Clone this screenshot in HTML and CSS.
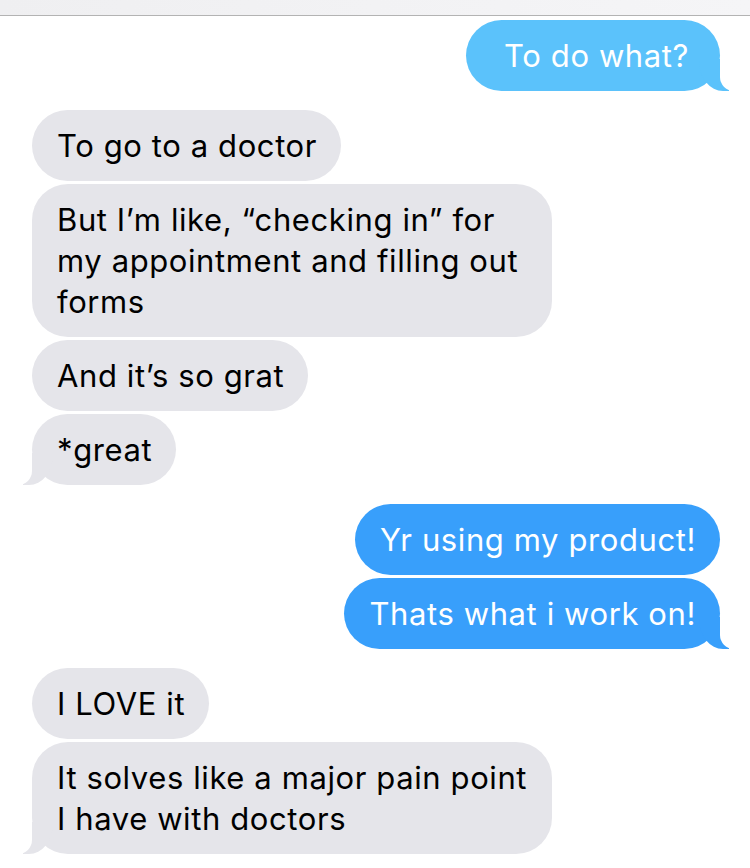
FILE: index.html
```html
<!DOCTYPE html>
<html lang="en">
<head>
    <meta charset="UTF-8">
    <meta name="viewport" content="width=device-width, initial-scale=1.0">
    <title>Messages</title>
    <link rel="stylesheet" href="styles.css">
</head>
<body>
    <div class="topbar"></div>

    <div class="thread">
        <div class="group sent">
            <p class="bubble light tail first">To do what?</p>
        </div>

        <div class="group received">
            <p class="bubble">To go to a doctor</p>
            <p class="bubble">But I’m like, “checking in” for my appointment and filling out forms</p>
            <p class="bubble">And it’s so grat</p>
            <p class="bubble tail">*great</p>
        </div>

        <div class="group sent">
            <p class="bubble">Yr using my product!</p>
            <p class="bubble tail">Thats what i work on!</p>
        </div>

        <div class="group received">
            <p class="bubble">I LOVE it</p>
            <p class="bubble tail">It solves like a major pain point I have with doctors</p>
        </div>
    </div>
</body>
</html>
```

FILE: styles.css
```css
body {
    margin: 0;
    background-color: #fff;
    font-family: Inter, "Liberation Sans", sans-serif;
}

.topbar {
    height: 15px;
    background: linear-gradient(to right, #efeff1, #f5f5f7);
    border-bottom: 1px solid #b3b3b3;
}

.thread {
    display: flex;
    flex-direction: column;
    gap: 19px;
    padding: 4px 30px 0 32px;
}

.group {
    display: flex;
    flex-direction: column;
    gap: 3px;
}

.sent {
    align-items: flex-end;
}

.received {
    align-items: flex-start;
}

.bubble {
    position: relative;
    box-sizing: border-box;
    max-width: 520px;
    margin: 0;
    padding: 15px 24px 15px 25px;
    font-size: 31px;
    line-height: 41px;
    letter-spacing: 0.6px;
    border-radius: 36px;
}

.received .bubble {
    background-color: #e5e5ea;
    color: #000;
}

.sent .bubble {
    background-color: #389ffb;
    color: #fff;
}

.sent .bubble.light {
    background-color: #5bc2fb;
}

.bubble.first {
    padding-left: 38px;
    padding-right: 31px;
}

/* tails */
.tail::before,
.tail::after {
    content: "";
    position: absolute;
    bottom: 0;
    height: 32px;
}

.tail::before {
    width: 30px;
    background: inherit;
}

.tail::after {
    width: 16px;
    background: #fff;
}

.sent .tail::before {
    right: -9px;
    border-bottom-left-radius: 24px 30px;
}

.sent .tail::after {
    right: -16px;
    border-bottom-left-radius: 14px;
}

.received .tail::before {
    left: -9px;
    border-bottom-right-radius: 24px 30px;
}

.received .tail::after {
    left: -16px;
    border-bottom-right-radius: 14px;
}
```
